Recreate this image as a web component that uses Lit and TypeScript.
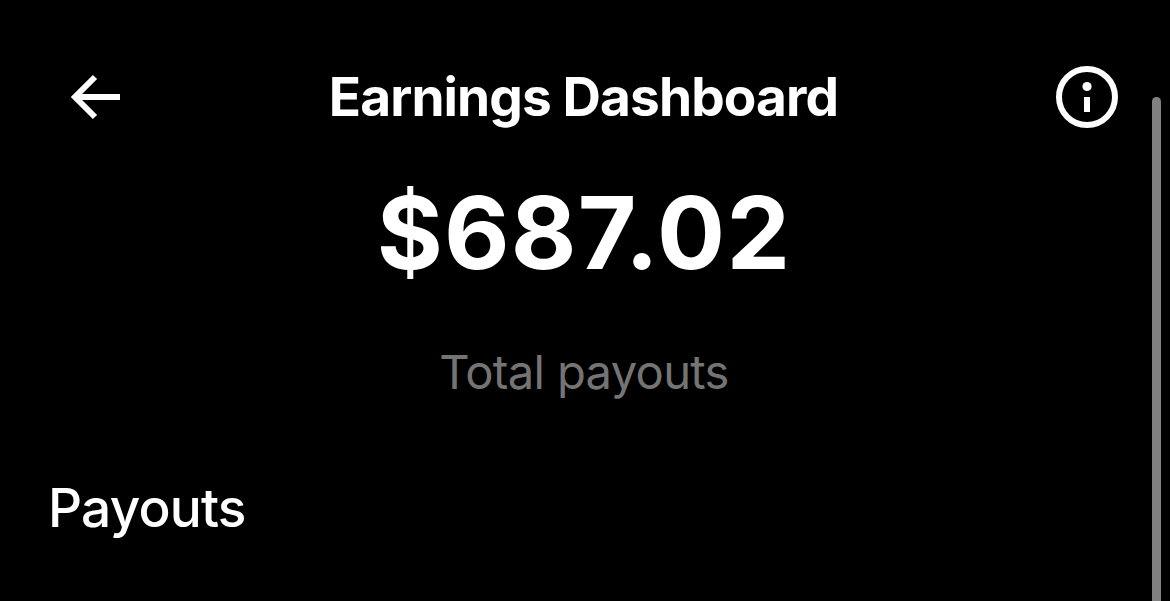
import { LitElement, html, css } from 'lit';
import { customElement, property } from 'lit/decorators.js';

@customElement('app-root')
export class AppRoot extends LitElement {
  static styles = css`
    :host {
      display: flex;
      width: 1170px;
      height: 601px;
      overflow: hidden;
      position: relative;
      background: #000;
      color: #fff;
      font-family: Inter, 'Liberation Sans', sans-serif;
    }

    .page {
      flex: 1;
      display: flex;
      flex-direction: column;
    }

    .header {
      display: grid;
      grid-template-columns: 80px 1fr 80px;
      align-items: center;
      height: 80px;
      padding: 57px 43px 0 56px;
    }

    .back {
      width: 80px;
      height: 80px;
    }

    .info {
      width: 80px;
      height: 80px;
    }

    .title {
      margin: 0;
      padding-right: 16px;
      text-align: center;
      font-size: 53.2px;
      line-height: 64px;
      font-weight: 700;
      letter-spacing: -0.9px;
      white-space: nowrap;
    }

    .summary {
      display: flex;
      flex-direction: column;
      align-items: center;
      padding: 30px 2px 0 0;
    }

    .amount {
      font-size: 101px;
      line-height: 130px;
      font-weight: 700;
      letter-spacing: 1.2px;
      white-space: nowrap;
    }

    .label {
      margin-top: 43px;
      font-size: 47.2px;
      line-height: 64px;
      letter-spacing: -0.7px;
      color: #747474;
      white-space: nowrap;
    }

    .section {
      margin: 72px 0 0 48px;
      font-size: 53.2px;
      line-height: 64px;
      font-weight: 550;
      letter-spacing: -0.8px;
    }

    .scrollbar {
      position: absolute;
      top: 97px;
      right: 9px;
      width: 9px;
      height: 520px;
      border-radius: 5px;
      background: #808080;
    }
  `;

  @property() total = '$687.02';

  render() {
    return html`
      <div class="page">
        <header class="header">
          <svg class="back" viewBox="0 0 80 80" fill="none" stroke="#fff" stroke-width="6">
            <path d="M64 40H19M39 20L19 40L39 60" />
          </svg>
          <h1 class="title"><span>Earnings Dashboard</span></h1>
          <svg class="info" viewBox="0 0 80 80" fill="none">
            <circle cx="40" cy="40" r="28" stroke="#fff" stroke-width="6" />
            <circle cx="40" cy="29.5" r="4.6" fill="#fff" />
            <path d="M40 40V55" stroke="#fff" stroke-width="6" />
          </svg>
        </header>
        <section class="summary">
          <div class="amount"><span>${this.total}</span></div>
          <div class="label"><span>Total payouts</span></div>
        </section>
        <div class="section"><span>Payouts</span></div>
      </div>
      <div class="scrollbar"></div>
    `;
  }
}
